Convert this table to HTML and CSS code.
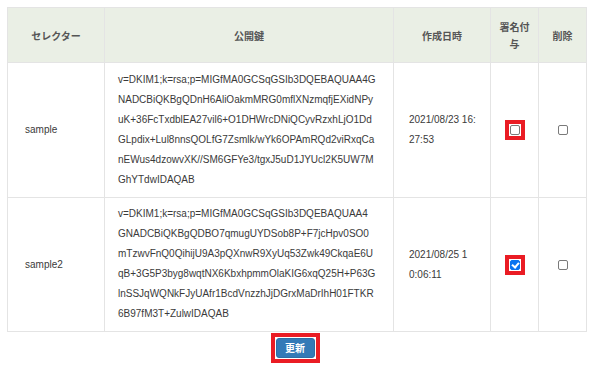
FILE: index.html
```html
<!DOCTYPE html>
<html lang="ja">
<head>
<meta charset="utf-8">
<title>DKIM</title>
<link rel="stylesheet" href="styles.css">
</head>
<body>
<div class="page">
  <table class="keys">
    <colgroup>
      <col class="c-sel"><col class="c-key"><col class="c-date"><col class="c-sign"><col class="c-del">
    </colgroup>
    <thead>
      <tr>
        <th>セレクター</th>
        <th>公開鍵</th>
        <th>作成日時</th>
        <th>署名付与</th>
        <th>削除</th>
      </tr>
    </thead>
    <tbody>
      <tr>
        <td class="sel">sample</td>
        <td class="key">v=DKIM1;k=rsa;p=MIGfMA0GCSqGSIb3DQEBAQUAA4G<br>NADCBiQKBgQDnH6AliOakmMRG0mflXNzmqfjEXidNPy<br>uK+36FcTxdblEA27vil6+O1DHWrcDNiQCyvRzxhLjO1Dd<br>GLpdix+Lul8nnsQOLfG7Zsmlk/wYk6OPAmRQd2viRxqCa<br>nEWus4dzowvXK//SM6GFYe3/tgxJ5uD1JYUcl2K5UW7M<br>GhYTdwIDAQAB</td>
        <td class="date">2021/08/23 16:<br>27:53</td>
        <td class="chk"><span class="mark"><input type="checkbox" class="cb"></span></td>
        <td class="chk"><input type="checkbox" class="cb"></td>
      </tr>
      <tr>
        <td class="sel">sample2</td>
        <td class="key key2">v=DKIM1;k=rsa;p=MIGfMA0GCSqGSIb3DQEBAQUAA4<br>GNADCBiQKBgQDBO7qmugUYDSob8P+F7jcHpv0SO0<br>mTzwvFnQ0QihijU9A3pQXnwR9XyUq53Zwk49CkqaE6U<br>qB+3G5P3byg8wqtNX6KbxhpmmOlaKIG6xqQ25H+P63G<br>lnSSJqWQNkFJyUAfr1BcdVnzzhJjDGrxMaDrIhH01FTKR<br>6B97fM3T+ZulwIDAQAB</td>
        <td class="date">2021/08/25 1<br>0:06:11</td>
        <td class="chk"><span class="mark"><input type="checkbox" class="cb" checked></span></td>
        <td class="chk"><input type="checkbox" class="cb"></td>
      </tr>
    </tbody>
  </table>
  <div class="actions">
    <span class="mark mark-btn"><button class="btn" type="button">更新</button></span>
  </div>
</div>
</body>
</html>
```
FILE: styles.css
```css
html, body {
  margin: 0;
  padding: 0;
  background: #fff;
}

.page {
  padding: 7px 0 0 7px;
  width: 579px;
  font-family: "Liberation Sans", "Noto Sans CJK JP", sans-serif;
  color: #3a3a3a;
}

.keys {
  border-collapse: collapse;
  table-layout: fixed;
  width: 580px;
}

.c-sel { width: 97px; }
.c-key { width: 289px; }
.c-date { width: 97px; }
.c-sign { width: 48px; }
.c-del { width: 48px; }

.keys th,
.keys td {
  border: 1px solid #e4e4e4;
}

.keys th {
  background: #eaefe5;
  color: #555;
  font-family: "Noto Sans CJK JP", sans-serif;
  font-weight: bold;
  font-size: 10px;
  line-height: 17px;
  padding: 10px 8px;
  text-align: center;
  vertical-align: middle;
}

.keys td {
  font-size: 10px;
  line-height: 20px;
  padding: 7px 8px;
  vertical-align: middle;
  white-space: nowrap;
}

.keys td.key2 { padding-top: 6px; }
.keys td.sel { padding-left: 17px; }
.keys td.key { padding-left: 13px; }
.keys td.date { padding-left: 15px; }
.keys td.chk { text-align: center; padding: 0; }

.mark {
  display: inline-flex;
  align-items: center;
  justify-content: center;
  border: 4px solid #ea1c24;
  vertical-align: middle;
}

.keys .mark {
  width: 12px;
  height: 12px;
}

.cb {
  appearance: none;
  -webkit-appearance: none;
  box-sizing: border-box;
  width: 10px;
  height: 10px;
  margin: 0;
  border: 1px solid #7a7a7a;
  border-radius: 2px;
  background: #fff;
  position: relative;
  vertical-align: middle;
}

.cb:checked {
  background: #0b74f0;
  border-color: #0b74f0;
}

.cb:checked::after {
  content: "";
  position: absolute;
  left: 2px;
  top: 0;
  width: 3px;
  height: 5px;
  border: solid #fff;
  border-width: 0 2px 2px 0;
  transform: rotate(40deg);
}

.actions {
  display: flex;
  justify-content: center;
  padding-top: 1px;
  width: 576px;
}

.mark-btn {
  width: 41px;
  height: 22px;
}

.btn {
  width: 39px;
  height: 20px;
  padding: 0;
  border: 1px solid #2e6da4;
  border-radius: 3px;
  background: #337ab7;
  color: #fff;
  font-family: "Noto Sans CJK JP", sans-serif;
  font-weight: bold;
  font-size: 10px;
  line-height: 18px;
}
```
